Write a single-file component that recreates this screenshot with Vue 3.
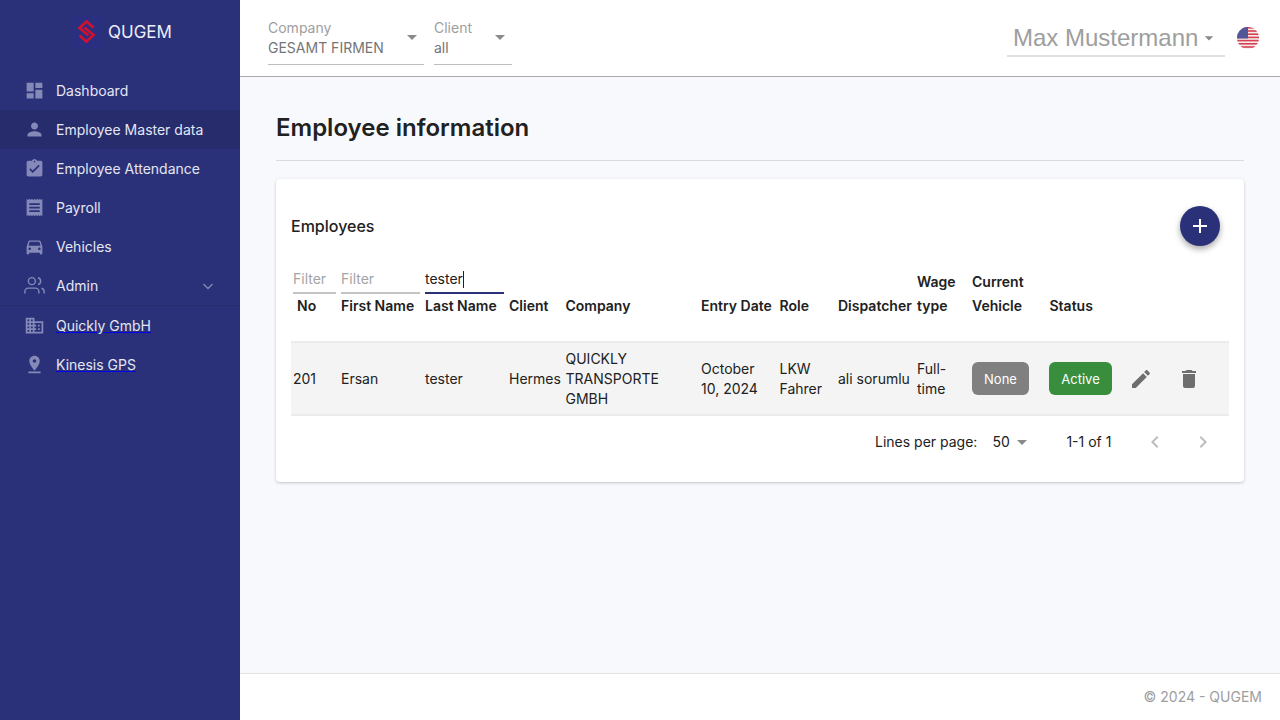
<script setup>
const menu = [
  { label: 'Dashboard', icon: 'M3 13h8V3H3v10zm0 8h8v-6H3v6zm10 0h8V11h-8v10zm0-18v6h8V3h-8z' },
  { label: 'Employee Master data', active: true, icon: 'M12 12c2.21 0 4-1.79 4-4s-1.79-4-4-4-4 1.79-4 4 1.79 4 4 4zm0 2c-2.67 0-8 1.34-8 4v2h16v-2c0-2.66-5.33-4-8-4z' },
  { label: 'Employee Attendance', icon: 'M19 3h-4.18C14.4 1.84 13.3 1 12 1c-1.3 0-2.4.84-2.82 2H5c-1.1 0-2 .9-2 2v14c0 1.1.9 2 2 2h14c1.1 0 2-.9 2-2V5c0-1.1-.9-2-2-2zm-7 0c.55 0 1 .45 1 1s-.45 1-1 1-1-.45-1-1 .45-1 1-1zm-2 14l-4-4 1.41-1.41L10 14.17l6.59-6.59L18 9l-8 8z' },
  { label: 'Payroll', icon: 'M18 17H6v-2h12v2zm0-4H6v-2h12v2zm0-4H6V7h12v2zM3 22l1.5-1.5L6 22l1.5-1.5L9 22l1.5-1.5L12 22l1.5-1.5L15 22l1.5-1.5L18 22l1.5-1.5L21 22V2l-1.5 1.5L18 2l-1.5 1.5L15 2l-1.5 1.5L12 2l-1.5 1.5L9 2 7.5 3.5 6 2 4.5 3.5 3 2v20z' },
  { label: 'Vehicles', icon: 'M18.92 6.01C18.72 5.42 18.16 5 17.5 5h-11c-.66 0-1.21.42-1.42 1.01L3 12v8c0 .55.45 1 1 1h1c.55 0 1-.45 1-1v-1h12v1c0 .55.45 1 1 1h1c.55 0 1-.45 1-1v-8l-2.08-5.99zM6.5 16c-.83 0-1.5-.67-1.5-1.5S5.67 13 6.5 13s1.5.67 1.5 1.5S7.33 16 6.5 16zm11 0c-.83 0-1.5-.67-1.5-1.5s.67-1.5 1.5-1.5 1.5.67 1.5 1.5-.67 1.5-1.5 1.5zM5 11l1.5-4.5h11L19 11H5z' }
]

const links = [
  { label: 'Quickly GmbH', icon: 'M12 7V3H2v18h20V7H12zM6 19H4v-2h2v2zm0-4H4v-2h2v2zm0-4H4V9h2v2zm0-4H4V5h2v2zm4 12H8v-2h2v2zm0-4H8v-2h2v2zm0-4H8V9h2v2zm0-4H8V5h2v2zm10 12h-8v-2h2v-2h-2v-2h2v-2h-2V9h8v10zm-2-8h-2v2h2v-2zm0 4h-2v2h2v-2z' },
  { label: 'Kinesis GPS', icon: 'M18 8c0-3.31-2.69-6-6-6S6 4.69 6 8c0 4.5 6 11 6 11s6-6.5 6-11zm-8 0c0-1.1.9-2 2-2s2 .9 2 2-.89 2-2 2c-1.1 0-2-.9-2-2zM5 20v2h14v-2H5z' }
]

const columns = [
  { label: 'No', width: 48, filter: '', hasFilter: true, cls: 'th-no' },
  { label: 'First Name', width: 84, filter: '', hasFilter: true },
  { label: 'Last Name', width: 84, filter: 'tester', hasFilter: true },
  { label: 'Client', width: 56.5 },
  { label: 'Company', width: 135.5 },
  { label: 'Entry Date', width: 78.5 },
  { label: 'Role', width: 58.5 },
  { label: 'Dispatcher', width: 79 },
  { label: 'Wage type', width: 55 },
  { label: 'Current Vehicle', width: 77.5 },
  { label: 'Status', width: 69.5 },
  { label: '', width: 48 },
  { label: '', width: 64 }
]

const row = ['201', 'Ersan', 'tester', 'Hermes', 'QUICKLY TRANSPORTE GMBH', 'October 10, 2024', 'LKW Fahrer', 'ali sorumlu', 'Full-time']
const stripes = [0, 1, 2, 3, 4, 5, 6]
</script>

<template>
  <div class="app">
    <aside class="sidebar">
      <div class="brand">
        <span class="logo-box">
          <svg class="logo" width="17" height="23" viewBox="0 0 17 23">
            <polyline points="15.5,7.5 8.5,1.5 1.5,8 10.5,15.5" />
            <polyline points="1.5,15.5 8.5,21.5 15.5,15 6.5,7.5" />
          </svg>
        </span>
        <span>QUGEM</span>
      </div>
      <nav class="nav">
        <div v-for="item in menu" :key="item.label" class="nav-item" :class="{ active: item.active }">
          <svg class="nav-icon" viewBox="0 0 24 24"><path :d="item.icon" /></svg>
          <span>{{ item.label }}</span>
        </div>
        <div class="nav-item admin">
          <svg class="nav-icon stroke" viewBox="0 0 24 24">
            <path d="M17 21v-2a4 4 0 0 0-4-4H5a4 4 0 0 0-4 4v2" />
            <circle cx="9" cy="7" r="4" />
            <path d="M23 21v-2a4 4 0 0 0-3-3.87" />
            <path d="M16 3.13a4 4 0 0 1 0 7.75" />
          </svg>
          <span>Admin</span>
          <svg class="chevron" width="12" height="12" viewBox="0 0 12 12"><polyline points="1.5,4 6,8.5 10.5,4" /></svg>
        </div>
        <div class="nav-sep"></div>
        <div v-for="item in links" :key="item.label" class="nav-item">
          <svg class="nav-icon" viewBox="0 0 24 24"><path :d="item.icon" /></svg>
          <a class="nav-link" href="#">{{ item.label }}</a>
        </div>
      </nav>
    </aside>

    <div class="main">
      <header class="topbar">
        <div class="select select-company">
          <div class="select-text">
            <div class="select-label">Company</div>
            <div class="select-value">GESAMT FIRMEN</div>
          </div>
          <svg class="caret" viewBox="0 0 24 24"><path d="M7 10l5 5 5-5H7z" /></svg>
        </div>
        <div class="select select-client">
          <div class="select-text">
            <div class="select-label">Client</div>
            <div class="select-value">all</div>
          </div>
          <svg class="caret" viewBox="0 0 24 24"><path d="M7 10l5 5 5-5H7z" /></svg>
        </div>
        <div class="spacer"></div>
        <div class="user">
          <span>Max Mustermann</span>
          <svg class="caret" viewBox="0 0 24 24"><path d="M7 10l5 5 5-5H7z" /></svg>
        </div>
        <svg class="flag" width="22" height="22" viewBox="0 0 22 22">
          <defs><clipPath id="flag-clip"><circle cx="11" cy="11" r="11" /></clipPath></defs>
          <g clip-path="url(#flag-clip)">
            <rect width="22" height="22" fill="#f3eeee" />
            <rect v-for="s in stripes" :key="s" x="0" :y="s * 3.2" width="22" height="1.6" fill="#d8404f" />
            <rect width="11" height="11.5" fill="#4f5797" />
          </g>
        </svg>
      </header>

      <main class="content">
        <h1 class="title">Employee information</h1>
        <hr class="rule" />
        <section class="card">
          <div class="card-head">
            <h2>Employees</h2>
            <button class="fab" type="button">
              <svg width="24" height="24" viewBox="0 0 24 24"><path d="M19 13h-6v6h-2v-6H5v-2h6V5h2v6h6v2z" /></svg>
            </button>
          </div>
          <table class="table">
            <colgroup>
              <col v-for="(c, i) in columns" :key="i" :style="{ width: c.width + 'px' }" />
            </colgroup>
            <thead>
              <tr>
                <th v-for="(c, i) in columns" :key="i">
                  <div v-if="c.hasFilter" class="filter" :class="{ focused: c.filter }">
                    <template v-if="c.filter">{{ c.filter }}<i class="text-caret"></i></template>
                    <span v-else class="placeholder">Filter</span>
                  </div>
                  <div :class="c.cls">{{ c.label }}</div>
                </th>
              </tr>
            </thead>
            <tbody>
              <tr>
                <td v-for="(val, i) in row" :key="i">{{ val }}</td>
                <td><span class="chip chip-none">None</span></td>
                <td><span class="chip chip-active">Active</span></td>
                <td class="action">
                  <svg width="24" height="24" viewBox="0 0 24 24"><path d="M20.71 7.04c.39-.39.39-1.04 0-1.41l-2.34-2.34c-.37-.39-1.02-.39-1.41 0l-1.84 1.83 3.75 3.75M3 17.25V21h3.75L17.81 9.93l-3.75-3.75L3 17.25z" /></svg>
                </td>
                <td class="action">
                  <svg width="24" height="24" viewBox="0 0 24 24"><path d="M19 4h-3.5l-1-1h-5l-1 1H5v2h14M6 19a2 2 0 0 0 2 2h8a2 2 0 0 0 2-2V7H6v12z" /></svg>
                </td>
              </tr>
            </tbody>
          </table>
          <div class="pager">
            <span class="pager-label">Lines per page:</span>
            <span class="per-page">
              50
              <svg class="caret" viewBox="0 0 24 24"><path d="M7 10l5 5 5-5H7z" /></svg>
            </span>
            <span class="range">1-1 of 1</span>
            <svg class="page-btn" viewBox="0 0 24 24"><path d="M15.41 16.58L10.83 12l4.58-4.59L14 6l-6 6 6 6 1.41-1.42z" /></svg>
            <svg class="page-btn" viewBox="0 0 24 24"><path d="M8.59 16.58L13.17 12 8.59 7.41 10 6l6 6-6 6-1.41-1.42z" /></svg>
          </div>
        </section>
      </main>

      <footer class="footer">© 2024 - QUGEM</footer>
    </div>
  </div>
</template>

<style>
html, body {
  margin: 0;
  overflow: hidden;
}
</style>

<style scoped>
.app {
  display: flex;
  width: 1280px;
  height: 720px;
  font-family: Inter, "Liberation Sans", sans-serif;
  font-size: 14px;
  color: #212121;
}

.sidebar {
  width: 240px;
  flex: none;
  background: #2a3178;
  color: #e4e6f3;
}

.brand {
  display: flex;
  align-items: center;
  gap: 6px;
  height: 63px;
  padding-left: 71px;
  font-size: 17px;
  color: #eceef8;
}

.logo-box {
  display: flex;
  align-items: center;
  justify-content: center;
  width: 31px;
  height: 32px;
  background: #2a2f80;
}

.logo {
  fill: none;
  stroke: #d3112f;
  stroke-width: 2.6;
  flex: none;
}

.nav {
  padding-top: 8px;
}

.nav-item {
  display: flex;
  align-items: center;
  height: 39px;
  padding-left: 23.5px;
}

.nav-item.active {
  background: #262c6c;
}

.nav-icon {
  width: 21px;
  height: 21px;
  margin-right: 11.5px;
  fill: #8489b8;
  flex: none;
}

.nav-icon.stroke {
  fill: none;
  stroke: #8489b8;
  stroke-width: 1.6;
}

.chevron {
  margin-left: auto;
  margin-right: 26px;
  fill: none;
  stroke: #8489b8;
  stroke-width: 1.4;
}

.nav-sep {
  height: 1px;
  background: #262c6c;
}

.nav-link {
  color: #e4e6f3;
  text-decoration-color: #0000ee;
}

.main {
  flex: 1;
  display: flex;
  flex-direction: column;
  min-width: 0;
  background: #f8f9fd;
}

.topbar {
  display: flex;
  align-items: flex-start;
  height: 58px;
  padding: 18px 21px 0 28px;
  background: #fff;
  border-bottom: 1px solid #a9a9a9;
}

.select {
  display: flex;
  height: 47px;
  box-sizing: border-box;
  border-bottom: 1px solid #bdbdbd;
  margin-right: 10px;
}

.select-company {
  width: 156px;
}

.select-client {
  width: 78px;
}

.select-text {
  flex: 1;
  line-height: 20px;
}

.select-label {
  color: #9e9e9e;
}

.select-value {
  color: #757575;
}

.caret {
  width: 24px;
  height: 24px;
  fill: #8a8a8a;
  flex: none;
}

.select .caret {
  margin-top: 7px;
}

.spacer {
  flex: 1;
}

.user {
  display: flex;
  align-items: center;
  width: 218px;
  height: 39px;
  box-sizing: border-box;
  padding: 2px 0 0 6px;
  border-bottom: 2px solid #e0e0e0;
  font-family: "Liberation Sans", sans-serif;
  font-size: 24px;
  color: #9e9e9e;
  margin-right: 12px;
}

.user .caret {
  width: 20px;
  height: 20px;
  margin-left: 1px;
}

.flag {
  margin-top: 9px;
  flex: none;
}

.content {
  flex: 1;
  padding: 36px 36px 0;
}

.title {
  margin: 0;
  font-size: 24px;
  line-height: 30px;
  font-weight: 600;
  color: #212121;
}

.rule {
  margin: 17px 0 18px;
  border: 0;
  border-top: 1px solid #d9dae2;
}

.card {
  height: 303px;
  box-sizing: border-box;
  padding: 0 15px;
  background: #fff;
  border-radius: 4px;
  box-shadow: 0 1px 3px rgba(0, 0, 0, 0.22);
}

.card-head {
  display: flex;
  align-items: flex-start;
  justify-content: space-between;
  height: 91px;
  padding: 27px 24px 0 0;
  box-sizing: border-box;
  margin-right: -15px;
}

.card-head h2 {
  margin: 0;
  font-size: 16px;
  line-height: 40px;
  font-weight: 500;
  color: #212121;
}

.fab {
  width: 40px;
  height: 40px;
  display: flex;
  align-items: center;
  justify-content: center;
  padding: 0;
  border: 0;
  border-radius: 50%;
  background: #2a3178;
  box-shadow: 0 3px 6px rgba(0, 0, 0, 0.35);
}

.fab svg {
  fill: #fff;
}

.table {
  width: 938px;
  table-layout: fixed;
  border-collapse: collapse;
}

.table th {
  padding: 0 2px 23px;
  vertical-align: bottom;
  text-align: left;
  font-weight: 600;
  line-height: 24px;
  color: #212121;
}

.th-no {
  padding-left: 4px;
}

.filter {
  height: 24px;
  margin-right: 1px;
  box-sizing: border-box;
  border-bottom: 2px solid #c4c4c4;
  font-weight: 400;
  line-height: 17px;
}

.filter.focused {
  border-bottom-color: #2a3178;
}

.placeholder {
  color: #a5a5a5;
}

.text-caret {
  display: inline-block;
  width: 1px;
  height: 17px;
  background: #212121;
  vertical-align: -4px;
}

.table tbody tr {
  background: #f4f4f4;
  border-top: 2px solid #ebebeb;
  border-bottom: 2px solid #ebebeb;
}

.table td {
  height: 71px;
  padding: 0 2px;
  line-height: 20px;
  color: #212121;
}

.chip {
  display: inline-flex;
  align-items: center;
  justify-content: center;
  height: 33px;
  border-radius: 6px;
  font-size: 13px;
  color: #fff;
}

.chip-none {
  width: 57px;
  background: #808080;
}

.chip-active {
  width: 63px;
  background: #388e3c;
  margin-left: -0.5px;
}

.action svg {
  display: block;
  fill: #6e6e6e;
  margin-left: 10px;
}

.pager {
  display: flex;
  align-items: center;
  height: 51px;
  padding-left: 584px;
  color: #212121;
}

.pager-label {
  flex: none;
  white-space: nowrap;
}

.per-page {
  display: flex;
  align-items: center;
  flex: none;
  margin-left: 15px;
  width: 74px;
  white-space: nowrap;
}

.range {
  flex: none;
  width: 77px;
  white-space: nowrap;
}

.page-btn {
  width: 24px;
  height: 24px;
  fill: #bdbdbd;
  margin-right: 24px;
  flex: none;
}

.footer {
  height: 47px;
  box-sizing: border-box;
  padding: 14px 18px 0 0;
  text-align: right;
  background: #fff;
  border-top: 1px solid #e4e4e4;
  color: #9e9e9e;
}
</style>
